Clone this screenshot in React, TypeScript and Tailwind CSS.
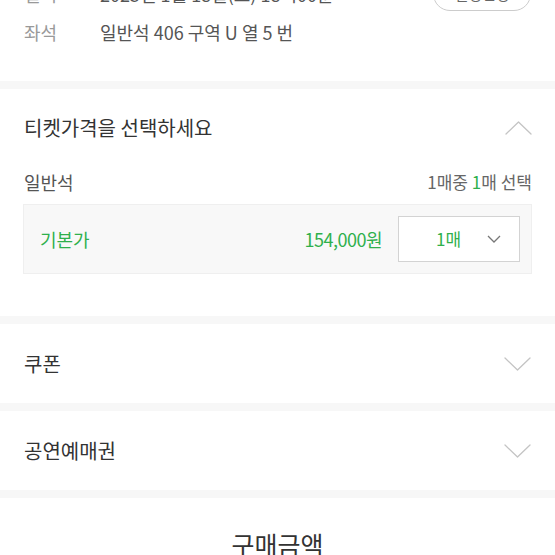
import React from 'react';

const GREEN = 'text-[#2fb04c]';

function Chevron({ up = false }: { up?: boolean }) {
  return (
    <svg width="27" height="16" viewBox="0 0 27 16" fill="none">
      <polyline
        points={up ? '1,14 13.5,2 26,14' : '1,2 13.5,14 26,2'}
        stroke="#c4c4c4"
        strokeWidth="1.3"
        strokeLinejoin="round"
        strokeLinecap="round"
      />
    </svg>
  );
}

function Divider() {
  return <div className="h-[8px] bg-[#f7f7f7]" />;
}

function Collapsed({ title }: { title: string }) {
  return (
    <div className="flex h-[79px] items-center justify-between px-[24px]">
      <span className="text-[20px] text-[#333]">{title}</span>
      <Chevron />
    </div>
  );
}

export default function App() {
  return (
    <div
      className="h-[555px] w-[555px] overflow-hidden bg-white"
      style={{ fontFamily: '"Noto Sans CJK KR", "Noto Sans", sans-serif' }}
    >
      {/* Booking info */}
      <div className="-mt-[23px] flex flex-col gap-[8px] px-[24px] pb-[36px]">
        <div className="flex h-[34px] items-center">
          <span className="w-[76px] text-[18px] text-[#999]">일시</span>
          <span className="text-[18px] text-[#555]">2025년 1월 18일(토) 18시00분</span>
          <span className="ml-auto flex h-[34px] w-[98px] items-center justify-center rounded-full border border-[#ccc] text-[15px] text-[#666]">
            일정변경
          </span>
        </div>
        <div className="flex h-[26px] items-center">
          <span className="w-[76px] text-[18px] text-[#999]">좌석</span>
          <span className="text-[18px] text-[#555]">일반석 406 구역 U 열 5 번</span>
        </div>
      </div>

      <Divider />

      {/* Ticket price */}
      <div className="px-[23px] pb-[42px] pt-[26px]">
        <div className="flex h-[26px] items-center justify-between pl-[1px]">
          <span className="text-[20px] text-[#333]">티켓가격을 선택하세요</span>
          <Chevron up />
        </div>
        <div className="mt-[28px] flex h-[26px] items-center justify-between pl-[1px]">
          <span className="text-[18px] text-[#555]">일반석</span>
          <span className="text-[17px] text-[#666]">
            1매중 <span className={GREEN}>1</span>매 선택
          </span>
        </div>
        <div className="mt-[9px] flex h-[70px] items-center border border-[#efefef] bg-[#f8f8f8] pl-[16px] pr-[11px]">
          <span className={`text-[18px] ${GREEN}`}>기본가</span>
          <span className={`ml-auto text-[18px] tracking-[-0.5px] ${GREEN}`}>154,000원</span>
          <div className="ml-[16px] flex h-[46px] w-[122px] items-center border border-[#d3d3d3] bg-white pl-[37px] pr-[18px]">
            <span className={`text-[17px] ${GREEN}`}>1매</span>
            <svg className="ml-auto" width="14" height="8" viewBox="0 0 14 8" fill="none">
              <polyline points="1,1 7,7 13,1" stroke="#777" strokeWidth="1.3" />
            </svg>
          </div>
        </div>
      </div>

      <Divider />
      <Collapsed title="쿠폰" />
      <Divider />
      <Collapsed title="공연예매권" />
      <Divider />

      <div className="flex justify-center pt-[28px]">
        <span className="text-[25px] text-[#333]">구매금액</span>
      </div>
    </div>
  );
}
